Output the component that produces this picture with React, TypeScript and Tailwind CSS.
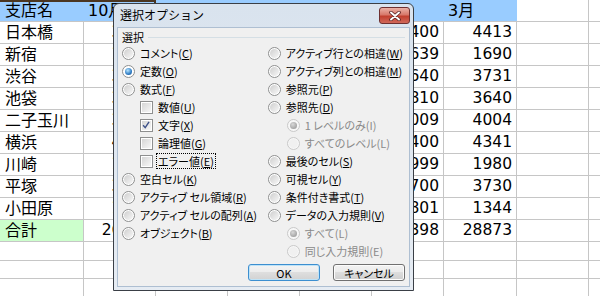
const colW = ["w-[84px]", "w-[72px]", "w-[72px]", "w-[72px]", "w-[72px]", "w-[72px]", "w-[73px]", "w-[72px]", "w-[72px]"];

const months = ["10月", "11月", "12月", "1月", "2月", "3月"];

const branches: [string, number[]][] = [
  ["日本橋", [3890, 3950, 4300, 4020, 4400, 4413]],
  ["新宿", [1520, 1580, 1750, 1600, 1639, 1690]],
  ["渋谷", [3350, 3400, 3600, 3300, 3640, 3731]],
  ["池袋", [3410, 3450, 3700, 3500, 3810, 3640]],
  ["二子玉川", [3760, 3800, 4100, 3900, 4009, 4004]],
  ["横浜", [4010, 4100, 4450, 4200, 4400, 4341]],
  ["川崎", [1830, 1870, 2050, 1900, 1999, 1980]],
  ["平塚", [3420, 3500, 3800, 3600, 3700, 3730]],
  ["小田原", [1250, 1290, 1400, 1300, 1801, 1344]],
];

const totals = months.map((_, i) => branches.reduce((s, [, v]) => s + v[i], 0));

function Cell({ i, className = "", children }: { i: number; className?: string; children?: React.ReactNode }) {
  return (
    <div className={`${colW[i]} h-full shrink-0 border-r border-[#c6c6c6] flex items-center ${className}`}>
      {children}
    </div>
  );
}

function Sheet() {
  return (
    <div className="flex flex-col font-['DejaVu_Sans','Noto_Sans_CJK_JP',sans-serif] text-[16px] text-black">
      {/* header */}
      <div className="flex h-[22px] border-b border-[#c6c6c6]">
        <Cell i={0} className="bg-[#99ccff] border-r-[#99ccff] pl-[5px]">支店名</Cell>
        {months.map((m, i) => (
          <Cell key={m} i={i + 1} className="bg-[#99ccff] border-r-[#99ccff] pl-[4px]">
            {m}
          </Cell>
        ))}
        <Cell i={7} />
        <Cell i={8} />
      </div>
      {branches.map(([name, vals]) => (
        <div key={name} className="flex h-[22px] border-b border-[#c6c6c6]">
          <Cell i={0} className="pl-[5px]">{name}</Cell>
          {vals.map((v, i) => (
            <Cell key={i} i={i + 1} className="justify-end pr-[4px] text-[15.5px]">
              {v}
            </Cell>
          ))}
          <Cell i={7} />
          <Cell i={8} />
        </div>
      ))}
      <div className="flex h-[22px] border-b border-[#c6c6c6]">
        <Cell i={0} className="bg-[#ccffcc] pl-[5px]">合計</Cell>
        {totals.map((v, i) => (
          <Cell key={i} i={i + 1} className="justify-end pr-[4px] text-[15.5px]">
            {v}
          </Cell>
        ))}
        <Cell i={7} />
        <Cell i={8} />
      </div>
      {["h-[19px]", "h-[18px]", "h-[18px]"].map((h, r) => (
        <div key={r} className={`flex ${h} border-b border-[#c6c6c6]`}>
          {colW.map((_, i) => (
            <Cell key={i} i={i} />
          ))}
        </div>
      ))}
    </div>
  );
}

function Radio({ checked, disabled }: { checked?: boolean; disabled?: boolean }) {
  return (
    <span
      className={`flex h-[13px] w-[13px] shrink-0 items-center justify-center rounded-full border ${
        disabled ? "border-[#c9c9c9] bg-[#f7f7f7]" : "border-[#8e8f8f] bg-white"
      }`}
    >
      {checked ? (
        <span
          className={`h-[7px] w-[7px] rounded-full ${
            disabled
              ? "bg-[radial-gradient(circle_at_40%_35%,#d8d8d8,#8f8f8f)]"
              : "bg-[radial-gradient(circle_at_40%_35%,#b8e6ff,#2f7cc4_60%,#1b4a80)]"
          }`}
        />
      ) : (
        <span
          className={`h-[9px] w-[9px] rounded-full ${
            disabled ? "bg-[#f0f0f0]" : "bg-gradient-to-br from-[#cfcfcf] to-[#f7f7f7]"
          }`}
        />
      )}
    </span>
  );
}

function Check({ checked }: { checked?: boolean }) {
  return (
    <span className="relative flex h-[13px] w-[13px] shrink-0 items-center justify-center border border-[#8e8f8f] bg-white">
      <span className="h-[9px] w-[9px] bg-gradient-to-br from-[#d6d6d6] to-[#f7f7f7]" />
      {checked && (
        <svg viewBox="0 0 13 13" className="absolute inset-0 h-[11px] w-[11px]">
          <path d="M2.5 6.2 L5 9 L9.5 2.2" fill="none" stroke="#3d5189" strokeWidth="1.7" />
        </svg>
      )}
    </span>
  );
}

type Item = {
  t: string;
  k: string;
  kind?: "check";
  checked?: boolean;
  sub?: boolean;
  disabled?: boolean;
  focus?: boolean;
};

const left: Item[] = [
  { t: "コメント", k: "C" },
  { t: "定数", k: "O", checked: true },
  { t: "数式", k: "F" },
  { t: "数値", k: "U", kind: "check", sub: true },
  { t: "文字", k: "X", kind: "check", sub: true, checked: true },
  { t: "論理値", k: "G", kind: "check", sub: true },
  { t: "エラー値", k: "E", kind: "check", sub: true, focus: true },
  { t: "空白セル", k: "K" },
  { t: "アクティブ セル領域", k: "R" },
  { t: "アクティブ セルの配列", k: "A" },
  { t: "オブジェクト", k: "B" },
];

const right: Item[] = [
  { t: "アクティブ行との相違", k: "W" },
  { t: "アクティブ列との相違", k: "M" },
  { t: "参照元", k: "P" },
  { t: "参照先", k: "D" },
  { t: "1 レベルのみ", k: "I", sub: true, disabled: true, checked: true },
  { t: "すべてのレベル", k: "L", sub: true, disabled: true },
  { t: "最後のセル", k: "S" },
  { t: "可視セル", k: "Y" },
  { t: "条件付き書式", k: "T" },
  { t: "データの入力規則", k: "V" },
  { t: "すべて", k: "L", sub: true, disabled: true, checked: true },
  { t: "同じ入力規則", k: "E", sub: true, disabled: true },
];

function Option({ item }: { item: Item }) {
  const indent = item.sub ? (item.kind === "check" ? "ml-[18px]" : "ml-[19px]") : "";
  return (
    <div className={`flex h-[18px] items-center ${indent}`}>
      {item.kind === "check" ? (
        <Check checked={item.checked} />
      ) : (
        <Radio checked={item.checked} disabled={item.disabled} />
      )}
      <span
        className={`ml-[3px] whitespace-nowrap leading-[14px] ${
          item.focus ? "border border-dotted border-black px-px" : "border border-transparent px-px"
        } ${item.disabled ? "text-[#8a8a8a]" : "text-black"}`}
      >
        {item.t}(
        {item.disabled ? item.k : <span className="underline underline-offset-[1px]">{item.k}</span>})
      </span>
    </div>
  );
}

function Dialog() {
  return (
    <div className="absolute left-[113px] top-[3px] flex h-[288px] w-[301px] flex-col rounded-t-[6px] border border-[#3a3f46] bg-gradient-to-b from-[#d9e3ee] to-[#e6ecf3] px-[3px] pb-[3px]">
      <div className="flex h-[23px] shrink-0 items-start justify-between">
        <span className="mt-[3px] pl-[3px] text-[12px] leading-[16px] text-black font-['Noto_Sans_CJK_JP',sans-serif]">
          選択オプション
        </span>
        <span className="mt-[3px] flex h-[17px] w-[31px] items-center justify-center rounded-[3px] border border-[#6e3030] bg-[linear-gradient(#eab1a6,#d8786a_45%,#c2402f_55%,#d0685a)]">
          <svg viewBox="0 0 14 10" className="h-[10px] w-[14px]">
            <path d="M3 1.5 L11 8.5 M11 1.5 L3 8.5" stroke="#5b2424" strokeWidth="3.6" strokeLinecap="round" />
            <path d="M3 1.5 L11 8.5 M11 1.5 L3 8.5" stroke="#ffffff" strokeWidth="1.9" strokeLinecap="round" />
          </svg>
        </span>
      </div>
      <div className="flex flex-1 flex-col border border-[#aebfd2] bg-[#f0f0f0] px-[4px] pt-[2px] font-['Noto_Sans_CJK_JP',sans-serif] text-[11px] text-black [font-feature-settings:'palt']">
        <div className="flex h-[14px] items-center gap-[4px]">
          <span className="leading-[14px]">選択</span>
          <span className="mt-[1px] h-px flex-1 bg-[#d5dfe5]" />
        </div>
        <div className="flex">
          <div className="flex w-[151px] flex-col">
            {left.map((it) => (
              <Option key={it.t} item={it} />
            ))}
          </div>
          <div className="flex flex-col">
            {right.map((it) => (
              <Option key={it.t} item={it} />
            ))}
          </div>
        </div>
        <div className="mt-[4px] flex justify-end gap-[13px]">
          <button className="flex h-[17px] w-[72px] items-center justify-center rounded-[3px] border border-[#3d8fd0] bg-[linear-gradient(#f4f4f4,#ececec_50%,#dedede_50%,#d2d2d2)] leading-[14px] shadow-[inset_0_0_0_1px_#bfe3f7]">
            OK
          </button>
          <button className="flex h-[17px] w-[72px] items-center justify-center rounded-[3px] border border-[#707070] bg-[linear-gradient(#f2f2f2,#ebebeb_50%,#dddddd_50%,#cfcfcf)] leading-[14px] shadow-[inset_0_0_0_1px_#fcfcfc]">
            キャンセル
          </button>
        </div>
      </div>
    </div>
  );
}

export default function App() {
  return (
    <div className="relative h-[296px] w-[600px] overflow-hidden bg-white">
      <Sheet />
      <div className="absolute left-0 top-0 h-[2px] w-[156px] bg-[#4b3621]" />
      <div className="absolute left-[154px] top-0 h-[5px] w-[2px] bg-[#4b3621]" />
      <Dialog />
    </div>
  );
}
